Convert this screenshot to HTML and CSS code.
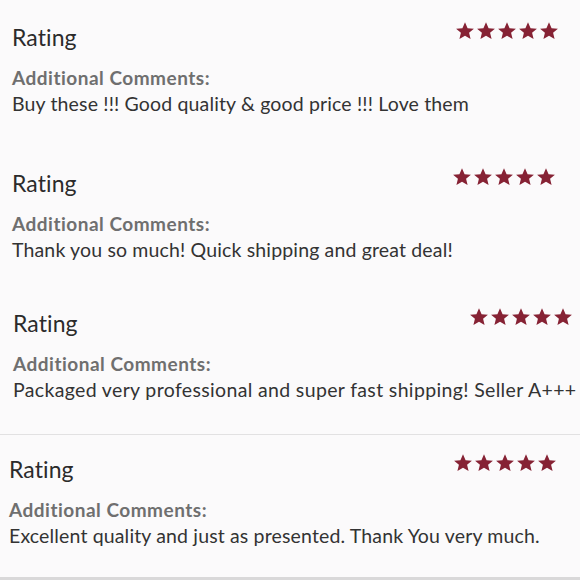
FILE: index.html
```html
<!DOCTYPE html>
<html>
<head>
<meta charset="utf-8">
<link rel="stylesheet" href="styles.css">
</head>
<body>
<main class="feed">
  <section class="review s1">
    <div class="head">
      <h2 class="title">Rating</h2>
      <div class="stars">
        <svg viewBox="0 0 24 24"><path d="M12 1.5l3.1 7.1 7.6.6-5.8 5 1.8 7.5L12 17.7l-6.7 4 1.8-7.5-5.8-5 7.6-.6z"/></svg>
        <svg viewBox="0 0 24 24"><path d="M12 1.5l3.1 7.1 7.6.6-5.8 5 1.8 7.5L12 17.7l-6.7 4 1.8-7.5-5.8-5 7.6-.6z"/></svg>
        <svg viewBox="0 0 24 24"><path d="M12 1.5l3.1 7.1 7.6.6-5.8 5 1.8 7.5L12 17.7l-6.7 4 1.8-7.5-5.8-5 7.6-.6z"/></svg>
        <svg viewBox="0 0 24 24"><path d="M12 1.5l3.1 7.1 7.6.6-5.8 5 1.8 7.5L12 17.7l-6.7 4 1.8-7.5-5.8-5 7.6-.6z"/></svg>
        <svg viewBox="0 0 24 24"><path d="M12 1.5l3.1 7.1 7.6.6-5.8 5 1.8 7.5L12 17.7l-6.7 4 1.8-7.5-5.8-5 7.6-.6z"/></svg>
      </div>
    </div>
    <p class="label">Additional Comments:</p>
    <p class="comment">Buy these !!! Good quality &amp; good price !!! Love them</p>
  </section>
  <section class="review s2">
    <div class="head">
      <h2 class="title">Rating</h2>
      <div class="stars">
        <svg viewBox="0 0 24 24"><path d="M12 1.5l3.1 7.1 7.6.6-5.8 5 1.8 7.5L12 17.7l-6.7 4 1.8-7.5-5.8-5 7.6-.6z"/></svg>
        <svg viewBox="0 0 24 24"><path d="M12 1.5l3.1 7.1 7.6.6-5.8 5 1.8 7.5L12 17.7l-6.7 4 1.8-7.5-5.8-5 7.6-.6z"/></svg>
        <svg viewBox="0 0 24 24"><path d="M12 1.5l3.1 7.1 7.6.6-5.8 5 1.8 7.5L12 17.7l-6.7 4 1.8-7.5-5.8-5 7.6-.6z"/></svg>
        <svg viewBox="0 0 24 24"><path d="M12 1.5l3.1 7.1 7.6.6-5.8 5 1.8 7.5L12 17.7l-6.7 4 1.8-7.5-5.8-5 7.6-.6z"/></svg>
        <svg viewBox="0 0 24 24"><path d="M12 1.5l3.1 7.1 7.6.6-5.8 5 1.8 7.5L12 17.7l-6.7 4 1.8-7.5-5.8-5 7.6-.6z"/></svg>
      </div>
    </div>
    <p class="label">Additional Comments:</p>
    <p class="comment">Thank you so much! Quick shipping and great deal!</p>
  </section>
  <section class="review s3">
    <div class="head">
      <h2 class="title">Rating</h2>
      <div class="stars">
        <svg viewBox="0 0 24 24"><path d="M12 1.5l3.1 7.1 7.6.6-5.8 5 1.8 7.5L12 17.7l-6.7 4 1.8-7.5-5.8-5 7.6-.6z"/></svg>
        <svg viewBox="0 0 24 24"><path d="M12 1.5l3.1 7.1 7.6.6-5.8 5 1.8 7.5L12 17.7l-6.7 4 1.8-7.5-5.8-5 7.6-.6z"/></svg>
        <svg viewBox="0 0 24 24"><path d="M12 1.5l3.1 7.1 7.6.6-5.8 5 1.8 7.5L12 17.7l-6.7 4 1.8-7.5-5.8-5 7.6-.6z"/></svg>
        <svg viewBox="0 0 24 24"><path d="M12 1.5l3.1 7.1 7.6.6-5.8 5 1.8 7.5L12 17.7l-6.7 4 1.8-7.5-5.8-5 7.6-.6z"/></svg>
        <svg viewBox="0 0 24 24"><path d="M12 1.5l3.1 7.1 7.6.6-5.8 5 1.8 7.5L12 17.7l-6.7 4 1.8-7.5-5.8-5 7.6-.6z"/></svg>
      </div>
    </div>
    <p class="label">Additional Comments:</p>
    <p class="comment wide">Packaged very professional and super fast shipping! Seller A+++</p>
  </section>
  <section class="review s4">
    <div class="head">
      <h2 class="title">Rating</h2>
      <div class="stars">
        <svg viewBox="0 0 24 24"><path d="M12 1.5l3.1 7.1 7.6.6-5.8 5 1.8 7.5L12 17.7l-6.7 4 1.8-7.5-5.8-5 7.6-.6z"/></svg>
        <svg viewBox="0 0 24 24"><path d="M12 1.5l3.1 7.1 7.6.6-5.8 5 1.8 7.5L12 17.7l-6.7 4 1.8-7.5-5.8-5 7.6-.6z"/></svg>
        <svg viewBox="0 0 24 24"><path d="M12 1.5l3.1 7.1 7.6.6-5.8 5 1.8 7.5L12 17.7l-6.7 4 1.8-7.5-5.8-5 7.6-.6z"/></svg>
        <svg viewBox="0 0 24 24"><path d="M12 1.5l3.1 7.1 7.6.6-5.8 5 1.8 7.5L12 17.7l-6.7 4 1.8-7.5-5.8-5 7.6-.6z"/></svg>
        <svg viewBox="0 0 24 24"><path d="M12 1.5l3.1 7.1 7.6.6-5.8 5 1.8 7.5L12 17.7l-6.7 4 1.8-7.5-5.8-5 7.6-.6z"/></svg>
      </div>
    </div>
    <p class="label">Additional Comments:</p>
    <p class="comment">Excellent quality and just as presented. Thank You very much.</p>
  </section>
</main>
</body>
</html>
```
FILE: styles.css
```css
html, body {
  margin: 0;
  padding: 0;
  background: #fbfafb;
}
body {
  width: 580px;
  height: 580px;
  overflow: hidden;
  font-family: "Lato", "Open Sans", sans-serif;
  color: #333333;
}
.feed {
  display: flex;
  flex-direction: column;
}
.review {
  box-sizing: border-box;
  display: flex;
  flex-direction: column;
  height: 146px;
  padding: 23px 21px 0 12px;
  overflow: hidden;
  white-space: nowrap;
}
.head {
  display: flex;
  justify-content: space-between;
  align-items: flex-start;
}
.title {
  margin: 0;
  font-size: 23px;
  line-height: 28px;
  font-weight: 400;
  letter-spacing: 0.1px;
  color: #2b2b2b;
}
.stars {
  display: flex;
  gap: 1px;
  margin-top: -2px;
}
.stars svg {
  width: 20px;
  height: 20px;
  fill: #862234;
}
.label {
  margin: 15px 0 0;
  font-size: 19px;
  line-height: 24px;
  font-weight: 700;
  letter-spacing: 0.5px;
  color: #6f6f6f;
}
.comment {
  margin: 2px 0 0;
  font-size: 19.5px;
  line-height: 24px;
  letter-spacing: 0.15px;
  color: #333333;
}
.comment.wide {
  letter-spacing: 0.35px;
}
.s2 {
  padding-right: 24px;
}
.s3 {
  height: 143px;
  padding: 17px 7px 0 13px;
  border-bottom: 1px solid #e2e1e2;
}
.s4 {
  height: 145px;
  padding: 20px 23px 0 9px;
  border-bottom: 3px solid #d9d8d9;
}
```
